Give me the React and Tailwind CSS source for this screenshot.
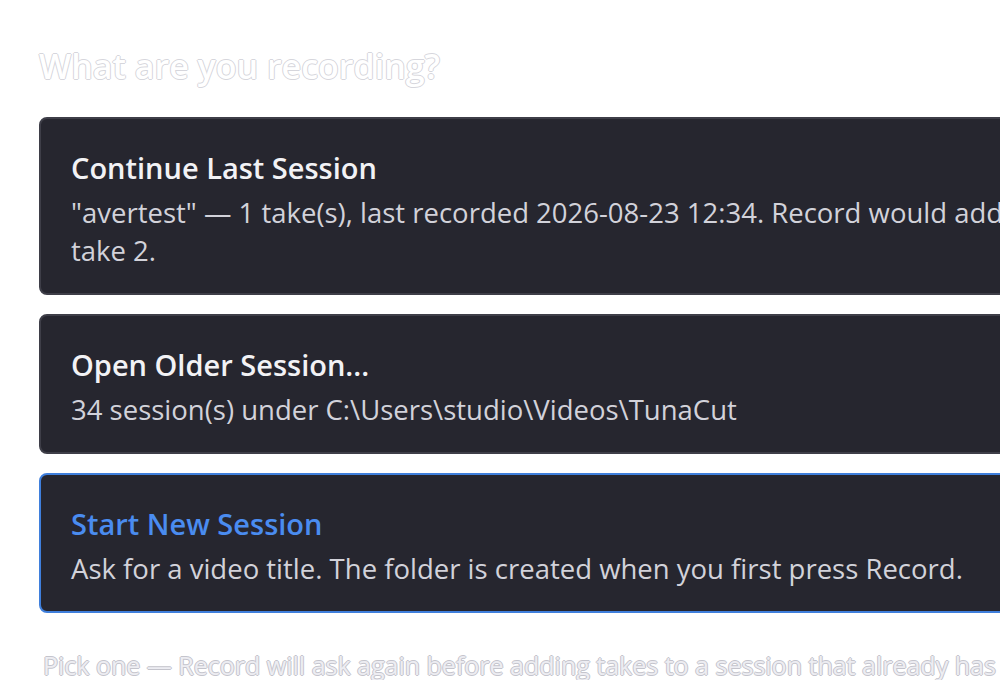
import React from "react";

const sessions = [
  {
    title: "Continue Last Session",
    lines: [
      "\"avertest\" — 1 take(s), last recorded 2026-08-23 12:34. Record would add to",
      "take 2.",
    ],
  },
  {
    title: "Open Older Session...",
    lines: ["34 session(s) under C:\\Users\\studio\\Videos\\TunaCut"],
  },
  {
    title: "Start New Session",
    lines: ["Ask for a video title. The folder is created when you first press Record."],
    active: true,
  },
];

const SessionCard = ({ title, lines, active }) => (
  <button
    type="button"
    className={`block w-[1100px] text-left rounded-lg border-2 bg-[#26262f] pl-[30px] pt-[31px] pb-[23px] ${
      active ? "border-[#3f7fdc]" : "border-[#3e3e48]"
    }`}
  >
    <div
      className={`text-[29px] leading-[36px] font-semibold ${
        active ? "text-[#4a8cf0]" : "text-[#f2f2f5]"
      }`}
    >
      {title}
    </div>
    <div className="mt-[8px] text-[27.5px] leading-[38px] text-[#d2d2da] whitespace-nowrap">
      {lines.map((line, i) => (
        <div key={i}>{line}</div>
      ))}
    </div>
  </button>
);

const App = () => {
  return (
    <div className="w-[1000px] h-[680px] overflow-hidden bg-white font-['Open_Sans',sans-serif]">
      <div className="pl-[39px] pt-[45px]">
        <h1 className="text-[34px] leading-[42px] font-semibold text-white [text-shadow:1px_0_0_#d6d6dc,-1px_0_0_#d6d6dc,0_1px_0_#d6d6dc,0_-1px_0_#d6d6dc]">
          What are you recording?
        </h1>

        <div className="mt-[30px] flex flex-col gap-[19px]">
          {sessions.map((s) => (
            <SessionCard key={s.title} {...s} />
          ))}
        </div>

        <p className="mt-[34px] pl-[4px] text-[25px] leading-[36px] text-[#ededf2] whitespace-nowrap [text-shadow:1px_0_0_#c4c4cc,-1px_0_0_#c4c4cc,0_1px_0_#c4c4cc,0_-1px_0_#c4c4cc]">
          Pick one — Record will ask again before adding takes to a session that already has
        </p>
      </div>
    </div>
  );
};

export default App;
